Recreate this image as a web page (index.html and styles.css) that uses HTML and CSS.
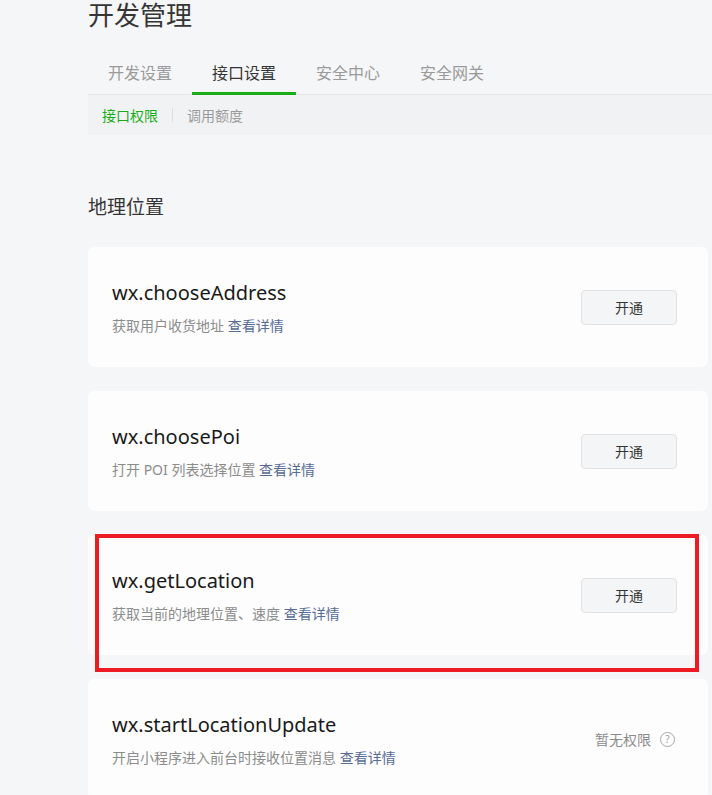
FILE: index.html
```html
<!DOCTYPE html>
<html lang="zh-CN">
<head>
<meta charset="utf-8">
<title>开发管理</title>
<link rel="stylesheet" href="styles.css">
</head>
<body>
<div class="main">
  <h1 class="page-title">开发管理</h1>
  <div class="tabs">
    <a class="tab">开发设置</a>
    <a class="tab active">接口设置</a>
    <a class="tab">安全中心</a>
    <a class="tab">安全网关</a>
  </div>
  <div class="subnav">
    <a class="sub active">接口权限</a>
    <span class="sep"></span>
    <a class="sub">调用额度</a>
  </div>

  <h2 class="section-title">地理位置</h2>

  <div class="list">
    <div class="card">
      <div class="info">
        <div class="api">wx.chooseAddress</div>
        <div class="desc">获取用户收货地址 <a class="link">查看详情</a></div>
      </div>
      <button class="btn">开通</button>
    </div>
    <div class="card">
      <div class="info">
        <div class="api">wx.choosePoi</div>
        <div class="desc">打开 POI 列表选择位置 <a class="link">查看详情</a></div>
      </div>
      <button class="btn">开通</button>
    </div>
    <div class="card highlighted">
      <div class="info">
        <div class="api">wx.getLocation</div>
        <div class="desc">获取当前的地理位置、速度 <a class="link">查看详情</a></div>
      </div>
      <button class="btn">开通</button>
      <div class="mark"></div>
    </div>
    <div class="card">
      <div class="info">
        <div class="api">wx.startLocationUpdate</div>
        <div class="desc">开启小程序进入前台时接收位置消息 <a class="link">查看详情</a></div>
      </div>
      <div class="status">暂无权限 <span class="help">?</span></div>
    </div>
  </div>
</div>
</body>
</html>
```

FILE: styles.css
```css
html, body {
  margin: 0;
  padding: 0;
  background: #f5f6f7;
}
body {
  font-family: "Noto Sans", "Noto Sans CJK SC", sans-serif;
  color: #353535;
}
.main {
  padding-left: 88px;
}
.page-title {
  margin: 0;
  font-size: 26px;
  line-height: 30px;
  font-weight: normal;
  color: #353535;
}
.tabs {
  display: flex;
  margin-top: 30px;
  border-bottom: 1px solid #e5e5e5;
}
.tab {
  position: relative;
  padding: 0 20px 8px;
  font-size: 16px;
  line-height: 26px;
  color: #9a9a9a;
}
.tab.active {
  color: #353535;
}
.tab.active::after {
  content: "";
  position: absolute;
  left: 0;
  right: 0;
  bottom: -1px;
  height: 3px;
  background: #1aad19;
}
.subnav {
  display: flex;
  align-items: center;
  height: 40px;
  padding-left: 14px;
  background: #f1f2f4;
  font-size: 14px;
}
.sub {
  color: #9a9a9a;
}
.sub.active {
  color: #1aad19;
}
.sep {
  width: 1px;
  height: 14px;
  background: #dedede;
  margin: 0 14px;
}
.section-title {
  margin: 58px 0 0;
  font-size: 19px;
  line-height: 28px;
  font-weight: normal;
  color: #353535;
}
.list {
  display: flex;
  flex-direction: column;
  gap: 24px;
  margin-top: 26px;
  width: 620px;
}
.card {
  position: relative;
  display: flex;
  align-items: center;
  justify-content: space-between;
  height: 120px;
  box-sizing: border-box;
  padding: 0 31px 0 24px;
  background: #fdfdfd;
  border-radius: 6px;
}
.api {
  font-size: 20px;
  line-height: 28px;
  color: #1a1a1a;
}
.desc {
  margin-top: 9px;
  font-size: 14px;
  line-height: 20px;
  color: #8c8c8c;
}
.link {
  color: #576b95;
}
.btn {
  width: 96px;
  height: 35px;
  border: 1px solid #e2e2e2;
  border-radius: 4px;
  background: #f4f5f6;
  font-family: inherit;
  font-size: 14px;
  color: #353535;
  padding: 0;
}
.status {
  display: flex;
  align-items: center;
  font-size: 14px;
  color: #8c8c8c;
  margin-right: 2px;
}
.help {
  display: inline-flex;
  align-items: center;
  justify-content: center;
  width: 13px;
  height: 13px;
  margin-left: 9px;
  border: 1px solid #a8a8a8;
  border-radius: 50%;
  font-size: 10px;
  line-height: 1;
  color: #a0a0a0;
}
.mark {
  position: absolute;
  left: 7px;
  top: -1px;
  width: 604px;
  height: 138px;
  box-sizing: border-box;
  border: 4px solid #ed1c24;
  pointer-events: none;
}
```
